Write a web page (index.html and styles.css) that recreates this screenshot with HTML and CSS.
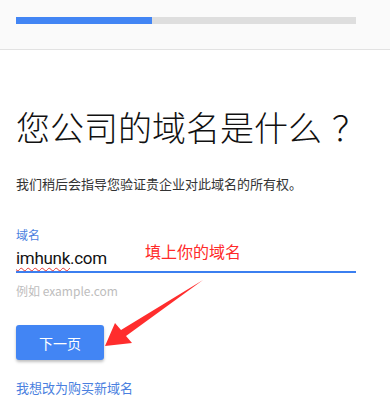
FILE: index.html
```html
<!DOCTYPE html>
<html lang="zh-CN">
<head>
<meta charset="utf-8">
<title>域名</title>
<link rel="stylesheet" href="styles.css">
</head>
<body>
<div class="page">
  <header class="top">
    <div class="progress"><div class="progress-fill" style="width:40%"></div></div>
  </header>
  <main class="content">
    <h1 class="title">您公司的域名是什么<span class="q">？</span></h1>
    <p class="desc">我们稍后会指导您验证贵企业对此域名的所有权。</p>
    <div class="field">
      <div class="label">域名</div>
      <div class="input"><span class="typo">imhunk</span>.com</div>
      <div class="hint">例如 example.com</div>
    </div>
    <button class="btn">下一页</button>
    <a class="link">我想改为购买新域名</a>
  </main>
  <div class="note">填上你的域名</div>
  <svg class="arrow" width="390" height="407" viewBox="0 0 390 407">
    <polygon points="105,346 115,323 121,330 203,280 126,336 132,343" fill="#ff2d2d"/>
  </svg>
</div>
</body>
</html>
```
FILE: styles.css
```css
html, body {
  margin: 0;
  padding: 0;
  background: #ffffff;
}
body {
  font-family: "Noto Sans CJK SC", "Noto Sans", sans-serif;
  color: #222;
}
.page {
  position: relative;
  width: 390px;
  height: 407px;
  overflow: hidden;
}
.top {
  height: 50px;
  box-sizing: border-box;
  background: #fafafa;
  border-bottom: 1px solid #e2e2e2;
  padding: 17px 0 0 16px;
}
.progress {
  width: 340px;
  height: 7px;
  background: #dedede;
}
.progress-fill {
  height: 100%;
  background: #4285f4;
}
.content {
  padding: 0 16px;
  display: flex;
  flex-direction: column;
  align-items: flex-start;
}
.title {
  margin: 55px 0 0;
  font-size: 34px;
  line-height: 44px;
  font-weight: 300;
  color: #111;
  text-spacing-trim: space-all;
}
.q {
  margin-left: 10px;
}
.desc {
  margin: 26px 0 0;
  font-size: 13px;
  line-height: 18px;
  color: #333;
}
.field {
  width: 340px;
  margin-top: 34px;
}
.label {
  font-size: 12px;
  line-height: 16px;
  color: #4a7fe0;
}
.input {
  margin-top: 3px;
  font-family: Roboto, "Liberation Sans", sans-serif;
  font-size: 17px;
  letter-spacing: -0.3px;
  line-height: 24px;
  color: #111;
  padding-bottom: 1px;
  border-bottom: 2px solid #3b7ff0;
}
.typo {
  text-decoration: underline wavy #e53935;
  text-decoration-thickness: 1px;
  text-underline-offset: 3px;
}
.hint {
  margin-top: 10px;
  font-size: 12px;
  line-height: 16px;
  color: #bdbdbd;
}
.btn {
  margin-top: 26px;
  width: 88px;
  height: 35px;
  border: none;
  border-radius: 3px;
  background: #4285f4;
  color: #fff;
  font-family: "Noto Sans CJK SC", sans-serif;
  font-size: 14px;
  box-shadow: 0 2px 3px rgba(0,0,0,0.25);
  padding: 0;
}
.link {
  margin-top: 19px;
  font-size: 13px;
  line-height: 18px;
  color: #4a7fe0;
}
.note {
  position: absolute;
  left: 145px;
  top: 240px;
  font-size: 16px;
  line-height: 22px;
  color: #ff2a2a;
}
.arrow {
  position: absolute;
  left: 0;
  top: 0;
}
```
